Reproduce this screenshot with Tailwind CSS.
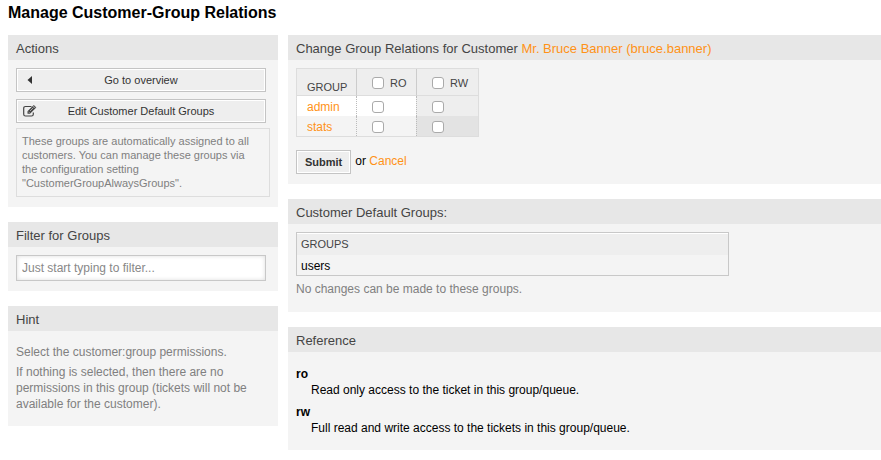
<!DOCTYPE html>
<html lang="en">
<head>
<meta charset="utf-8">
<title>Manage Customer-Group Relations</title>
<script src="https://cdn.jsdelivr.net/npm/@tailwindcss/browser@4"></script>
</head>
<body class="bg-white pl-2 font-['Liberation_Sans',Arial,sans-serif] text-[12px] leading-4 text-black">
<h1 class="pt-[3px] pb-3 text-[16px] leading-5 font-bold">Manage Customer-Group Relations</h1>
<div class="flex items-start gap-2.5">
  <aside class="flex w-[270px] shrink-0 flex-col gap-[15px]">
    <section class="bg-[#f4f4f4]">
      <h2 class="bg-[#e7e7e7] px-2 pt-0.5 text-[13px] leading-[23px] text-[#444]">Actions</h2>
      <div class="px-2 pt-2 pb-2.5">
        <ul class="mr-1 flex flex-col gap-[7px]">
          <li><a href="#" class="flex h-6 items-center border border-[#c4c4c4] bg-[#eee] px-1.5 text-[11px] text-[#333] inset-ring inset-ring-white">
            <svg class="h-3.5 w-3.5 shrink-0" viewBox="0 0 14 14" fill="#333" aria-hidden="true"><path d="M9 3v8L4.500 7z"/></svg>
            <span class="flex-1 pr-3.5 text-center">Go to overview</span></a></li>
          <li><a href="#" class="flex h-6 items-center border border-[#c4c4c4] bg-[#eee] px-1.5 text-[11px] text-[#333] inset-ring inset-ring-white">
            <svg class="h-3.5 w-3.5 shrink-0" viewBox="0 0 14 14" fill="none" stroke="#444" aria-hidden="true"><path d="M8.500 2.500H2.500Q.7 2.500.7 4.300v5.900q0 1.800 1.800 1.800h6q1.800 0 1.800-1.800V8.500" stroke-width="1.2"/><path d="M4.500 9.700V7.200L10.800.9l2.500 2.500L7 9.700z" fill="#444" stroke="none"/><path d="M5.400 7.700l1.100 1.100M7 7l3.500-3.500M10 1.800l2.400 2.400" stroke="#eee" stroke-width=".6"/></svg>
            <span class="flex-1 pr-3.5 text-center">Edit Customer Default Groups</span></a></li>
        </ul>
        <p class="mt-[5px] border border-[#ddd] pt-[5px] pr-3 pb-1.5 pl-[5px] text-[11px] leading-[14px] text-[#808080]">These groups are automatically assigned to all customers. You can manage these groups via the configuration setting "CustomerGroupAlwaysGroups".</p>
      </div>
    </section>
    <section class="bg-[#f4f4f4]">
      <h2 class="bg-[#e7e7e7] px-2 pt-0.5 text-[13px] leading-[23px] text-[#444]"><label for="filter">Filter for Groups</label></h2>
      <div class="pt-2 pr-3 pb-2.5 pl-2">
        <input id="filter" type="text" placeholder="Just start typing to filter..." class="block h-[26px] w-full border border-[#c8c8c8] bg-white px-[5px] text-[12px] inset-shadow-[0_0_4px_#ddd] placeholder:text-[#888]">
      </div>
    </section>
    <section class="bg-[#f4f4f4]">
      <h2 class="bg-[#e7e7e7] px-2 pt-0.5 text-[13px] leading-[23px] text-[#444]">Hint</h2>
      <div class="flex flex-col gap-1 px-2 pt-[13px] pb-3.5 text-[#808080]">
        <p>Select the customer:group permissions.</p>
        <p>If nothing is selected, then there are no permissions in this group (tickets will not be available for the customer).</p>
      </div>
    </section>
  </aside>
  <main class="flex min-w-0 flex-1 flex-col gap-[15px]">
    <section class="bg-[#f4f4f4]">
      <h2 class="bg-[#e7e7e7] px-2 pt-0.5 text-[13px] leading-[23px] text-[#444]">Change Group Relations for Customer <a href="#" class="text-[#ff9217]">Mr. Bruce Banner (bruce.banner)</a></h2>
      <form class="px-2 pt-2 pb-2.5">
        <table class="border-separate border-spacing-0 border border-[#ddd] text-left">
          <thead class="bg-[#eee] text-[11px] text-[#444]">
            <tr class="h-[27px]">
              <th class="w-[59px] border-b border-[#ddd] pt-2.5 pl-2.5 font-normal">GROUP</th>
              <th class="w-[60px] border-b border-l border-b-[#ddd] border-l-[#ccc] pl-[15px] font-normal"><label class="flex items-center gap-1.5 pt-0.5"><input type="checkbox" class="size-3 appearance-none rounded-[3px] border border-[#aaa] bg-white checked:bg-[#ff9217]">RO</label></th>
              <th class="w-[62px] border-b border-l border-b-[#ddd] border-l-[#ccc] pl-[15px] font-normal"><label class="flex items-center gap-1.5 pt-0.5"><input type="checkbox" class="size-3 appearance-none rounded-[3px] border border-[#aaa] bg-white checked:bg-[#ff9217]">RW</label></th>
            </tr>
          </thead>
          <tbody>
            <tr class="h-5 bg-white">
              <td class="pt-0.5 pl-2.5"><a href="#" class="text-[#ff9217]">admin</a></td>
              <td class="border-l border-dotted border-[#bbb] pt-0.5 pl-[15px]"><input type="checkbox" aria-label="admin ro" class="block size-3 appearance-none rounded-[3px] border border-[#aaa] bg-white checked:bg-[#ff9217]"></td>
              <td class="border-l border-dotted border-[#bbb] bg-[#eee] pt-0.5 pl-[15px]"><input type="checkbox" aria-label="admin rw" class="block size-3 appearance-none rounded-[3px] border border-[#aaa] bg-white checked:bg-[#ff9217]"></td>
            </tr>
            <tr class="h-5">
              <td class="pt-0.5 pl-2.5"><a href="#" class="text-[#ff9217]">stats</a></td>
              <td class="border-l border-dotted border-[#bbb] pt-0.5 pl-[15px]"><input type="checkbox" aria-label="stats ro" class="block size-3 appearance-none rounded-[3px] border border-[#aaa] bg-white checked:bg-[#ff9217]"></td>
              <td class="border-l border-dotted border-[#bbb] bg-[#e3e3e3] pt-0.5 pl-[15px]"><input type="checkbox" aria-label="stats rw" class="block size-3 appearance-none rounded-[3px] border border-[#aaa] bg-white checked:bg-[#ff9217]"></td>
            </tr>
          </tbody>
        </table>
        <div class="mt-[13px] flex items-center gap-1">
          <button type="button" class="h-6 border border-[#c4c4c4] bg-[#eee] px-2 text-[11px] font-bold text-[#333] inset-ring inset-ring-white">Submit</button>
          <span class="pb-0.5">or <a href="#" class="text-[#ff9217]">Cancel</a></span>
        </div>
      </form>
    </section>
    <section class="bg-[#f4f4f4]">
      <h2 class="bg-[#e7e7e7] px-2 pt-0.5 text-[13px] leading-[23px] text-[#444]">Customer Default Groups:</h2>
      <div class="px-2 pt-2 pb-[15px]">
        <table class="w-3/4 border-separate border-spacing-0 border border-[#c8c8c8] text-left">
          <thead><tr class="h-[22px]"><th class="border-t border-white bg-[#eee] px-1 pb-0.5 text-[11px] font-normal text-[#444]">GROUPS</th></tr></thead>
          <tbody><tr class="h-5"><td class="px-1 pt-0.5">users</td></tr></tbody>
        </table>
        <p class="mt-[5px] text-[#808080]">No changes can be made to these groups.</p>
      </div>
    </section>
    <section class="bg-[#f4f4f4]">
      <h2 class="bg-[#e7e7e7] px-2 pt-0.5 text-[13px] leading-[23px] text-[#444]">Reference</h2>
      <dl class="px-2 py-3.5">
        <dt class="font-bold">ro</dt>
        <dd class="mb-1.5 pl-[15px]">Read only access to the ticket in this group/queue.</dd>
        <dt class="font-bold">rw</dt>
        <dd class="pl-[15px]">Full read and write access to the tickets in this group/queue.</dd>
      </dl>
    </section>
  </main>
</div>
</body>
</html>
